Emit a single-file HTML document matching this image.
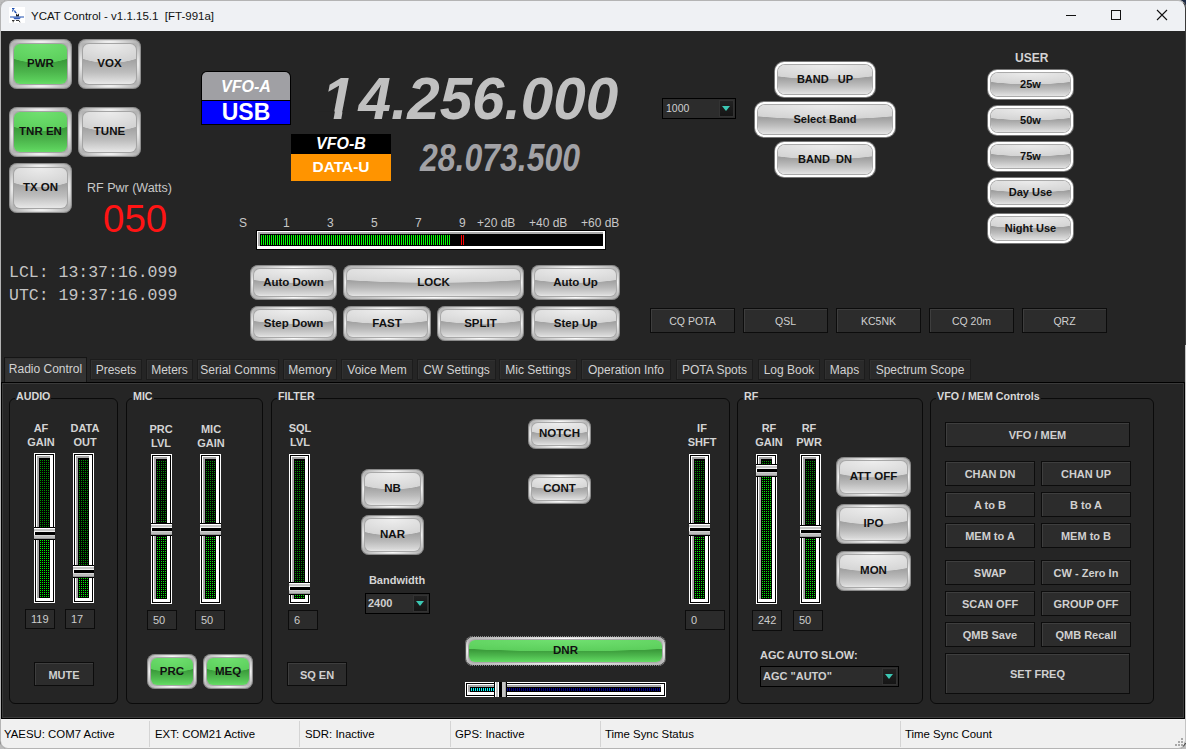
<!DOCTYPE html>
<html><head><meta charset="utf-8">
<style>
*{box-sizing:border-box;margin:0;padding:0}
html,body{width:1186px;height:749px;overflow:hidden;background:#bdbdbd;font-family:"Liberation Sans",sans-serif}
.a{position:absolute}
#win{position:absolute;left:0;top:0;width:1186px;height:749px;background:#252525;overflow:hidden;border-radius:8px 8px 8px 8px}
#frame{position:absolute;left:0;top:0;width:1186px;height:749px;border:1px solid #b4b4b4;border-right-color:#3a3a3a;border-radius:8px}
#title{position:absolute;left:0;top:0;width:1186px;height:31px;background:#eff1f4}
#title .t{position:absolute;left:31px;top:10px;font-size:11.5px;color:#111}
.lbl{position:absolute;color:#cfcfcf;font-size:12px;white-space:nowrap}
/* glossy square button */
.g{position:absolute;border-radius:8px;background:radial-gradient(45% 3px at 50% 3px,#fafafa,rgba(250,250,250,0)),radial-gradient(45% 3px at 50% calc(100% - 3px),#fafafa,rgba(250,250,250,0)),radial-gradient(3px 40% at 3px 50%,#f4f4f4,rgba(244,244,244,0)),radial-gradient(3px 40% at calc(100% - 3px) 50%,#f4f4f4,rgba(244,244,244,0)),#b4b4b4;box-shadow:inset 0 0 0 1px #8e8e8e}
.g::before{content:"";position:absolute;left:5px;right:5px;top:5px;bottom:5px;border-radius:6px;box-shadow:0 0 0 1px #a4a4a4;background:radial-gradient(ellipse 82% 48% at 50% 0%,#ececec 0%,#d2d2d2 97%,rgba(210,210,210,0) 100%),linear-gradient(180deg,#999 0%,#a2a2a2 40%,#bdbdbd 70%,#dcdcdc 92%,#e8e8e8 100%)}
.g.gr::before{background:radial-gradient(ellipse 82% 48% at 50% 0%,#70e070 0%,#5ccf5c 97%,rgba(92,207,92,0) 100%),linear-gradient(180deg,#2f8f2f 0%,#3a9a3a 40%,#4cb54c 70%,#5cd05c 92%,#66dd66 100%)}
.g span{position:absolute;left:0;right:0;top:calc(50% - 1px);transform:translateY(-50%);text-align:center;font-weight:bold;font-size:11.5px;color:#111;white-space:nowrap}
/* glossy pill */
.p{position:absolute;border-radius:8px;background:radial-gradient(45% 2.5px at 50% 2.5px,#fafafa,rgba(250,250,250,0)),radial-gradient(45% 2.5px at 50% calc(100% - 2.5px),#fafafa,rgba(250,250,250,0)),radial-gradient(2.5px 40% at 2.5px 50%,#f4f4f4,rgba(244,244,244,0)),radial-gradient(2.5px 40% at calc(100% - 2.5px) 50%,#f4f4f4,rgba(244,244,244,0)),#b8b8b8;box-shadow:inset 0 0 0 1px #8a8a8a}
.p::before{content:"";position:absolute;left:4px;right:4px;top:4px;bottom:4px;border-radius:6px;box-shadow:0 0 0 1px #a8a8a8;background:radial-gradient(ellipse 85% 52% at 50% 0%,#eeeeee 0%,#d6d6d6 96%,rgba(214,214,214,0) 100%),linear-gradient(180deg,#9c9c9c 0%,#a2a2a2 45%,#bababa 70%,#d6d6d6 92%,#e6e6e6 100%)}
.p.gr::before{background:radial-gradient(ellipse 85% 52% at 50% 0%,#70e070 0%,#5ccf5c 96%,rgba(92,207,92,0) 100%),linear-gradient(180deg,#2f8f2f 0%,#3a9a3a 45%,#4cb54c 70%,#5cd05c 92%,#66dd66 100%)}
.p span{position:absolute;left:0;right:0;top:calc(50% - 1px);transform:translateY(-50%);text-align:center;font-weight:bold;font-size:11.5px;color:#111;white-space:nowrap}
/* white ring */
.w{position:absolute;border-radius:9px;background:#fff;box-shadow:0 0 0 1px #777}
.w::before{content:"";position:absolute;left:3px;right:3px;top:3px;bottom:3px;border-radius:7px;background:radial-gradient(ellipse 85% 50% at 50% 0%,#ececec 0%,#d4d4d4 96%,rgba(212,212,212,0) 100%),linear-gradient(180deg,#989898 0%,#a0a0a0 45%,#bcbcbc 70%,#d8d8d8 92%,#e4e4e4 100%);box-shadow:0 0 0 1px #aaa}
.w span{position:absolute;left:0;right:0;top:calc(50% - 1px);transform:translateY(-50%);text-align:center;font-weight:bold;font-size:11px;color:#111;white-space:nowrap}
/* flat dark */
.f{position:absolute;background:#2c2c2c;border:1px solid #0c0c0c;box-shadow:inset 1px 1px 0 #3e3e3e;color:#d0d0d0;font-size:11px;font-weight:bold;text-align:center;white-space:nowrap;display:flex;align-items:center;justify-content:center}
.f.n{font-weight:normal}
/* group box */
.grp{position:absolute;border:1px solid #0a0a0a;border-radius:6px}
.grp b{position:absolute;left:5px;top:-10px;background:#252525;padding:0 1px;font-size:10.7px;color:#d8d8d8;line-height:14px}
.gl{position:absolute;color:#d4d4d4;font-size:11px;font-weight:bold;text-align:center;line-height:14px;white-space:nowrap}
.vb{position:absolute;background:#2b2b2b;border:1px solid #0c0c0c;color:#cdcdcd;font-size:11px;padding-left:5px;line-height:18px}
/* vertical slider */
.vs{position:absolute;width:21px;background:#fff;border:1px solid #fff}
.vs .k{position:absolute;left:0;top:0;right:0;bottom:0;border:1px solid #000;background:#fff}
.vs .in{position:absolute;left:1px;top:1px;right:3px;bottom:3px;border-left:2px solid #a8a8a8;border-top:2px solid #a8a8a8;background:#000}
.dots{position:absolute;left:1px;top:1px;right:0;bottom:1px;background-image:linear-gradient(90deg,transparent 50%,#000 50%),linear-gradient(0deg,transparent 50%,#000 50%);background-size:2px 2px}
.th{position:absolute;left:-1px;width:21px;height:11px;background:linear-gradient(180deg,#fff 0,#fff 1px,#c4c4c4 1px,#c4c4c4 3px,#f0f0f0 3px,#f0f0f0 4px,#000 4px,#000 7px,#d4d4d4 7px,#d4d4d4 8px,#bcbcbc 8px,#bcbcbc 10px,#989898 10px);box-shadow:0 -1px 0 #000,0 1px 0 #000}
.th::after{content:"";position:absolute;left:0;top:4px;width:1px;height:3px;background:#fff}
.dd{position:absolute;background:#2c2c2c;border:1px solid #000;color:#d0d0d0;font-size:11px;line-height:18px;padding-left:4px}
.dd i{position:absolute;right:1px;top:1px;width:15px;height:17px;background:linear-gradient(#222,#151515);border:1px solid #333}
.dd i::after{content:"";position:absolute;left:2px;top:5px;border-left:4.5px solid transparent;border-right:4.5px solid transparent;border-top:5px solid #3cc8b4}
.tab{position:absolute;top:359px;height:21px;background:#2a2a2a;border:1px solid #1c1c1c;box-shadow:inset 1px 1px 0 #303030;color:#d2d2d2;font-size:12px;line-height:20px;text-align:center;white-space:nowrap}
.sb{position:absolute;top:728px;font-size:11.4px;color:#000}
</style></head><body>
<div class="a" style="left:1176px;top:0;width:10px;height:10px;background:#1e2a44"></div>
<div id="win">
<div id="title">
  <svg class="a" style="left:9px;top:7px" width="16" height="16" viewBox="0 0 16 16"><rect width="16" height="16" fill="#fff"/><path d="M3 1.5h2.5M4.5 1.5l-1 3" stroke="#1d4fb0" stroke-width="1.1" fill="none"/><path d="M5.5 3.5q0.5 2 2 2.5" stroke="#1d4fb0" stroke-width="1.2" fill="none"/><path d="M7 9.5v-3l1.5 1.5 1.5-1.5v3z" fill="#222"/><path d="M1 9.5h14v1H1z" fill="#1d4fb0"/><path d="M4 10.5h8l-1.5 1.8h-5z" fill="#2f58b8"/><path d="M3 13.5h2.5M4.2 13.5v1.8M7 13.5h3M10 13.5l1 1.8" stroke="#222" stroke-width="0.9" fill="none"/></svg>
  <div class="t">YCAT Control - v1.1.15.1&nbsp; [FT-991a]</div>
  <div class="a" style="left:1066px;top:15px;width:10px;height:1px;background:#111"></div>
  <div class="a" style="left:1111px;top:10px;width:10px;height:10px;border:1px solid #111"></div>
  <svg class="a" style="left:1156px;top:9px" width="12" height="12" viewBox="0 0 12 12"><path d="M1 1L11 11M11 1L1 11" stroke="#111" stroke-width="1.1"/></svg>
</div>

<!-- left buttons -->
<div class="g gr" style="left:9px;top:39px;width:63px;height:50px"><span>PWR</span></div>
<div class="g" style="left:78px;top:39px;width:63px;height:50px"><span>VOX</span></div>
<div class="g gr" style="left:9px;top:107px;width:63px;height:50px"><span>TNR EN</span></div>
<div class="g" style="left:78px;top:107px;width:63px;height:50px"><span>TUNE</span></div>
<div class="g" style="left:9px;top:163px;width:63px;height:50px"><span>TX ON</span></div>
<div class="lbl" style="left:87px;top:181px;font-size:12.5px;color:#c8c8c8">RF Pwr (Watts)</div>
<div class="lbl" style="left:103px;top:197px;font-size:38.5px;color:#ff1414;line-height:44px">050</div>
<div class="lbl" style="left:9px;top:261px;font-family:'Liberation Mono',monospace;font-size:16.5px;color:#c4c4c4;line-height:23px">LCL: 13:37:16.099<br>UTC: 19:37:16.099</div>
<!-- VFO boxes -->
<div class="a" style="left:201px;top:71px;width:90px;height:54px;background:#000;border-radius:6px 6px 0 0"></div>
<div class="a" style="left:202px;top:72px;width:88px;height:28px;background:#a0a0a4;border-radius:5px 5px 0 0;color:#fff;font-weight:bold;font-style:italic;font-size:16px;text-align:center;line-height:30px">VFO-A</div>
<div class="a" style="left:202px;top:101px;width:88px;height:23px;background:#0000ff;color:#fff;font-weight:bold;font-size:23px;text-align:center;line-height:23px">USB</div>
<div class="a" style="left:291px;top:134px;width:100px;height:20px;background:#000;color:#fff;font-weight:bold;font-style:italic;font-size:16px;text-align:center;line-height:20px">VFO-B</div>
<div class="a" style="left:291px;top:154px;width:100px;height:27px;background:#ff9400;color:#fff;font-weight:bold;font-size:15.5px;text-align:center;line-height:25px">DATA-U</div>
<div class="lbl" style="left:326px;top:67px;font-size:60px;font-weight:bold;font-style:italic;color:#c0c0c0;line-height:64px;transform:scaleX(0.973);transform-origin:0 0"><span style="position:relative;left:-4px">1</span>4.256.000</div>
<svg class="a" style="left:0;top:0" width="1186" height="200"><polygon points="318,111.6 334.9,111.6 333.6,119 318,119" fill="#252525"/><polygon points="342.6,111.6 353,111.6 353,119 341.3,119" fill="#252525"/></svg>
<div class="lbl" style="left:420px;top:137px;font-size:39px;font-weight:bold;font-style:italic;color:#a2a2a6;line-height:42px;transform:scaleX(0.82);transform-origin:0 0">28.073.500</div>
<!-- meter -->
<div class="lbl" style="left:239px;top:216px;font-size:12px;color:#c8c8c8">S</div>
<div class="lbl" style="left:283px;top:216px;font-size:12px;color:#c8c8c8">1</div>
<div class="lbl" style="left:327px;top:216px;font-size:12px;color:#c8c8c8">3</div>
<div class="lbl" style="left:371px;top:216px;font-size:12px;color:#c8c8c8">5</div>
<div class="lbl" style="left:415px;top:216px;font-size:12px;color:#c8c8c8">7</div>
<div class="lbl" style="left:459px;top:216px;font-size:12px;color:#c8c8c8">9</div>
<div class="lbl" style="left:477px;top:216px;font-size:12px;color:#c8c8c8">+20 dB</div>
<div class="lbl" style="left:529px;top:216px;font-size:12px;color:#c8c8c8">+40 dB</div>
<div class="lbl" style="left:581px;top:216px;font-size:12px;color:#c8c8c8">+60 dB</div>
<div class="a" style="left:256px;top:230px;width:350px;height:20px;background:#000"></div>
<div class="a" style="left:257px;top:231px;width:348px;height:18px;background:#fff"></div>
<div class="a" style="left:258px;top:232px;width:345px;height:14px;background:#000;border-left:2px solid #a8a8a8;border-top:2px solid #a8a8a8"></div>
<div class="a" style="left:261px;top:235px;width:190px;height:10px;background:repeating-linear-gradient(90deg,#00ff00 0,#00ff00 1px,#000 1px,#000 2px)"></div>
<div class="a" style="left:461px;top:235px;width:3px;height:10px;background:repeating-linear-gradient(90deg,#ff0000 0,#ff0000 1px,#000 1px,#000 2px)"></div>
<!-- tuning buttons -->
<div class="p" style="left:250px;top:265px;width:87px;height:35px"><span>Auto Down</span></div>
<div class="p" style="left:343px;top:265px;width:181px;height:35px"><span>LOCK</span></div>
<div class="p" style="left:531px;top:265px;width:89px;height:35px"><span>Auto Up</span></div>
<div class="p" style="left:250px;top:306px;width:87px;height:35px"><span>Step Down</span></div>
<div class="p" style="left:343px;top:306px;width:88px;height:35px"><span>FAST</span></div>
<div class="p" style="left:437px;top:306px;width:87px;height:35px"><span>SPLIT</span></div>
<div class="p" style="left:531px;top:306px;width:89px;height:35px"><span>Step Up</span></div>
<!-- step dropdown & band -->
<div class="dd" style="left:662px;top:98px;width:74px;height:21px;font-size:10.5px;padding-left:3px">1000<i></i></div>
<div class="w" style="left:775px;top:62px;width:100px;height:35px"><span>BAND &nbsp; UP</span></div>
<div class="w" style="left:755px;top:102px;width:140px;height:35px"><span>Select Band</span></div>
<div class="w" style="left:775px;top:142px;width:100px;height:35px"><span>BAND &nbsp;DN</span></div>
<!-- user -->
<div class="lbl" style="left:1015px;top:51px;font-size:12px;font-weight:bold;color:#d4d4d4">USER</div>
<div class="w" style="left:988px;top:70px;width:85px;height:29px"><span>25w</span></div>
<div class="w" style="left:988px;top:106px;width:85px;height:29px"><span>50w</span></div>
<div class="w" style="left:988px;top:142px;width:85px;height:29px"><span>75w</span></div>
<div class="w" style="left:988px;top:178px;width:85px;height:29px"><span>Day Use</span></div>
<div class="w" style="left:988px;top:214px;width:85px;height:29px"><span>Night Use</span></div>
<!-- macros -->
<div class="f n" style="left:650px;top:308px;width:85px;height:25px;font-size:10.5px">CQ POTA</div>
<div class="f n" style="left:743px;top:308px;width:85px;height:25px;font-size:10.5px">QSL</div>
<div class="f n" style="left:836px;top:308px;width:85px;height:25px;font-size:10.5px">KC5NK</div>
<div class="f n" style="left:929px;top:308px;width:85px;height:25px;font-size:10.5px">CQ 20m</div>
<div class="f n" style="left:1022px;top:308px;width:85px;height:25px;font-size:10.5px">QRZ</div>

<!-- tabs -->
<div class="tab" style="left:4px;top:357px;width:83px;height:25px;background:#333;line-height:22px;border-color:#151515;border-bottom:none">Radio Control</div>
<div class="tab" style="left:90px;width:52px">Presets</div>
<div class="tab" style="left:146px;width:47px">Meters</div>
<div class="tab" style="left:197px;width:82px">Serial Comms</div>
<div class="tab" style="left:283px;width:54px">Memory</div>
<div class="tab" style="left:341px;width:72px">Voice Mem</div>
<div class="tab" style="left:417px;width:79px">CW Settings</div>
<div class="tab" style="left:499px;width:78px">Mic Settings</div>
<div class="tab" style="left:581px;width:90px">Operation Info</div>
<div class="tab" style="left:676px;width:77px">POTA Spots</div>
<div class="tab" style="left:758px;width:62px">Log Book</div>
<div class="tab" style="left:824px;width:41px">Maps</div>
<div class="tab" style="left:869px;width:102px">Spectrum Scope</div>
<div class="a" style="left:1px;top:382px;width:1184px;height:337px;background:#000"></div>
<div class="a" style="left:2px;top:383px;width:1182px;height:335px;background:#252525;border-left:1px solid #3a3a3a;border-top:1px solid #3a3a3a;border-right:1px solid #3a3a3a;border-bottom:1px solid #3a3a3a"></div>
<!-- groups -->
<div class="grp" style="left:9px;top:398px;width:109px;height:306px"><b>AUDIO</b></div>
<div class="grp" style="left:126px;top:398px;width:137px;height:306px"><b>MIC</b></div>
<div class="grp" style="left:271px;top:398px;width:459px;height:306px"><b>FILTER</b></div>
<div class="grp" style="left:737px;top:398px;width:186px;height:306px"><b>RF</b></div>
<div class="grp" style="left:930px;top:398px;width:224px;height:306px"><b>VFO / MEM Controls</b></div>
<div class="gl" style="left:21px;top:421px;width:40px">AF<br>GAIN</div>
<div class="gl" style="left:64px;top:421px;width:42px">DATA<br>OUT</div>
<div class="gl" style="left:141px;top:422px;width:40px">PRC<br>LVL</div>
<div class="gl" style="left:190px;top:422px;width:42px">MIC<br>GAIN</div>
<div class="gl" style="left:280px;top:421px;width:40px">SQL<br>LVL</div>
<div class="gl" style="left:682px;top:421px;width:40px">IF<br>SHFT</div>
<div class="gl" style="left:749px;top:421px;width:40px">RF<br>GAIN</div>
<div class="gl" style="left:789px;top:421px;width:40px">RF<br>PWR</div>
<div class="vs" style="left:34px;top:453px;height:150px"><div class="k"><div class="in"><div class="dots" style="background-color:#00ee00"></div><div class="dots" style="bottom:auto;height:70px;background-color:#008f00"></div></div></div><div class="th" style="top:74px"></div></div>
<div class="vs" style="left:73px;top:453px;height:150px"><div class="k"><div class="in"><div class="dots" style="background-color:#00ee00"></div><div class="dots" style="bottom:auto;height:108px;background-color:#008f00"></div></div></div><div class="th" style="top:112px"></div></div>
<div class="vs" style="left:151px;top:454px;height:150px"><div class="k"><div class="in"><div class="dots" style="background-color:#00ee00"></div><div class="dots" style="bottom:auto;height:65px;background-color:#008f00"></div></div></div><div class="th" style="top:69px"></div></div>
<div class="vs" style="left:200px;top:454px;height:150px"><div class="k"><div class="in"><div class="dots" style="background-color:#00ee00"></div><div class="dots" style="bottom:auto;height:65px;background-color:#008f00"></div></div></div><div class="th" style="top:69px"></div></div>
<div class="vs" style="left:289px;top:454px;height:150px"><div class="k"><div class="in"><div class="dots" style="background-color:#00ee00"></div><div class="dots" style="bottom:auto;height:124px;background-color:#008f00"></div></div></div><div class="th" style="top:128px"></div></div>
<div class="vs" style="left:689px;top:454px;height:150px"><div class="k"><div class="in"><div class="dots" style="background-color:#00ee00"></div><div class="dots" style="bottom:auto;height:65px;background-color:#008f00"></div></div></div><div class="th" style="top:69px"></div></div>
<div class="vs" style="left:756px;top:454px;height:150px"><div class="k"><div class="in"><div class="dots" style="background-color:#00ee00"></div><div class="dots" style="bottom:auto;height:6px;background-color:#008f00"></div></div></div><div class="th" style="top:10px"></div></div>
<div class="vs" style="left:800px;top:454px;height:150px"><div class="k"><div class="in"><div class="dots" style="background-color:#00ee00"></div><div class="dots" style="bottom:auto;height:67px;background-color:#008f00"></div></div></div><div class="th" style="top:71px"></div></div>
<div class="vb" style="left:25px;top:609px;width:30px;height:20px">119</div>
<div class="vb" style="left:65px;top:609px;width:30px;height:20px">17</div>
<div class="vb" style="left:147px;top:610px;width:30px;height:20px">50</div>
<div class="vb" style="left:195px;top:610px;width:30px;height:20px">50</div>
<div class="vb" style="left:288px;top:610px;width:30px;height:20px">6</div>
<div class="vb" style="left:685px;top:610px;width:40px;height:20px">0</div>
<div class="vb" style="left:752px;top:610px;width:30px;height:21px">242</div>
<div class="vb" style="left:793px;top:610px;width:30px;height:21px">50</div>
<div class="f" style="left:34px;top:662px;width:60px;height:24px;padding-top:2px">MUTE</div>
<div class="p gr" style="left:147px;top:654px;width:50px;height:35px"><span>PRC</span></div>
<div class="p gr" style="left:203px;top:654px;width:50px;height:35px"><span>MEQ</span></div>
<div class="f" style="left:287px;top:662px;width:60px;height:24px;padding-top:2px">SQ EN</div>
<div class="p" style="left:361px;top:469px;width:63px;height:40px"><span>NB</span></div>
<div class="p" style="left:361px;top:515px;width:63px;height:40px"><span>NAR</span></div>
<div class="p" style="left:528px;top:419px;width:63px;height:30px"><span>NOTCH</span></div>
<div class="p" style="left:528px;top:474px;width:63px;height:30px"><span>CONT</span></div>
<div class="gl" style="left:357px;top:573px;width:80px">Bandwidth</div>
<div class="dd" style="left:365px;top:593px;width:65px;height:21px;font-weight:bold;padding-left:2px">2400<i></i></div>
<div class="p gr" style="left:465px;top:636px;width:201px;height:30px"><span>DNR</span></div>
<div class="a" style="left:465px;top:636px;width:201px;height:30px;border:1px dotted #202020;border-radius:8px"></div>
<div class="a" style="left:465px;top:682px;width:201px;height:15px;background:#fff"></div>
<div class="a" style="left:466px;top:683px;width:199px;height:13px;border:1px solid #000;background:#fff"></div>
<div class="a" style="left:468px;top:685px;width:193px;height:7px;border-left:2px solid #a8a8a8;border-top:2px solid #a8a8a8;background:#000"></div>
<div class="a" style="left:471px;top:688px;width:24px;height:3px;background:repeating-linear-gradient(90deg,#00ffff 0,#00ffff 1px,#000 1px,#000 2px)"></div>
<div class="a" style="left:507px;top:688px;width:153px;height:3px;background:repeating-linear-gradient(90deg,#000090 0,#000090 1px,#000 1px,#000 2px)"></div>
<div class="a" style="left:494px;top:682px;width:13px;height:15px;background:linear-gradient(90deg,#000 0,#000 1px,#fff 1px,#fff 2px,#c4c4c4 2px,#c4c4c4 4px,#fff 4px,#fff 5px,#000 5px,#000 8px,#c4c4c4 8px,#c4c4c4 11px,#a0a0a0 11px,#a0a0a0 12px,#000 12px)"></div>
<div class="p" style="left:836px;top:457px;width:75px;height:40px"><span>ATT OFF</span></div>
<div class="p" style="left:836px;top:504px;width:75px;height:40px"><span>IPO</span></div>
<div class="p" style="left:836px;top:551px;width:75px;height:40px"><span>MON</span></div>
<div class="gl" style="left:760px;top:648px;text-align:left">AGC AUTO SLOW:</div>
<div class="dd" style="left:760px;top:666px;width:139px;height:21px;font-weight:bold;line-height:19px;padding-left:2px">AGC "AUTO"<i></i></div>
<div class="f" style="left:945px;top:422px;width:185px;height:25px">VFO / MEM</div>
<div class="f" style="left:945px;top:461px;width:90px;height:25px">CHAN DN</div>
<div class="f" style="left:1041px;top:461px;width:90px;height:25px">CHAN UP</div>
<div class="f" style="left:945px;top:492px;width:90px;height:25px">A to B</div>
<div class="f" style="left:1041px;top:492px;width:90px;height:25px">B to A</div>
<div class="f" style="left:945px;top:523px;width:90px;height:25px">MEM to A</div>
<div class="f" style="left:1041px;top:523px;width:90px;height:25px">MEM to B</div>
<div class="f" style="left:945px;top:560px;width:90px;height:25px">SWAP</div>
<div class="f" style="left:1041px;top:560px;width:90px;height:25px">CW - Zero In</div>
<div class="f" style="left:945px;top:591px;width:90px;height:25px">SCAN OFF</div>
<div class="f" style="left:1041px;top:591px;width:90px;height:25px">GROUP OFF</div>
<div class="f" style="left:945px;top:622px;width:90px;height:25px">QMB Save</div>
<div class="f" style="left:1041px;top:622px;width:90px;height:25px">QMB Recall</div>
<div class="f" style="left:945px;top:653px;width:185px;height:41px">SET FREQ</div>
<!-- status bar -->
<div class="a" style="left:1px;top:719px;width:1184px;height:30px;background:#f0f0f0"></div>
<div class="a" style="left:149px;top:721px;width:1px;height:26px;background:#d4d4d4"></div>
<div class="a" style="left:299px;top:721px;width:1px;height:26px;background:#d4d4d4"></div>
<div class="a" style="left:450px;top:721px;width:1px;height:26px;background:#d4d4d4"></div>
<div class="a" style="left:600px;top:721px;width:1px;height:26px;background:#d4d4d4"></div>
<div class="a" style="left:900px;top:721px;width:1px;height:26px;background:#d4d4d4"></div>
<div class="sb" style="left:4px">YAESU: COM7 Active</div>
<div class="sb" style="left:155px">EXT: COM21 Active</div>
<div class="sb" style="left:305px">SDR: Inactive</div>
<div class="sb" style="left:455px">GPS: Inactive</div>
<div class="sb" style="left:605px">Time Sync Status</div>
<div class="sb" style="left:905px">Time Sync Count</div>

</div>
<div id="frame"></div>
<div class="a" style="left:1181px;top:738px;width:2px;height:2px;background:#a8a8a8"></div>
<div class="a" style="left:1178px;top:741px;width:2px;height:2px;background:#a8a8a8"></div>
<div class="a" style="left:1181px;top:741px;width:2px;height:2px;background:#a8a8a8"></div>
<div class="a" style="left:1175px;top:744px;width:2px;height:2px;background:#a8a8a8"></div>
<div class="a" style="left:1178px;top:744px;width:2px;height:2px;background:#a8a8a8"></div>
<div class="a" style="left:1181px;top:744px;width:2px;height:2px;background:#a8a8a8"></div>
<div class="a" style="left:1185px;top:345px;width:1px;height:398px;background:#c4c4c4"></div>
</body></html>
